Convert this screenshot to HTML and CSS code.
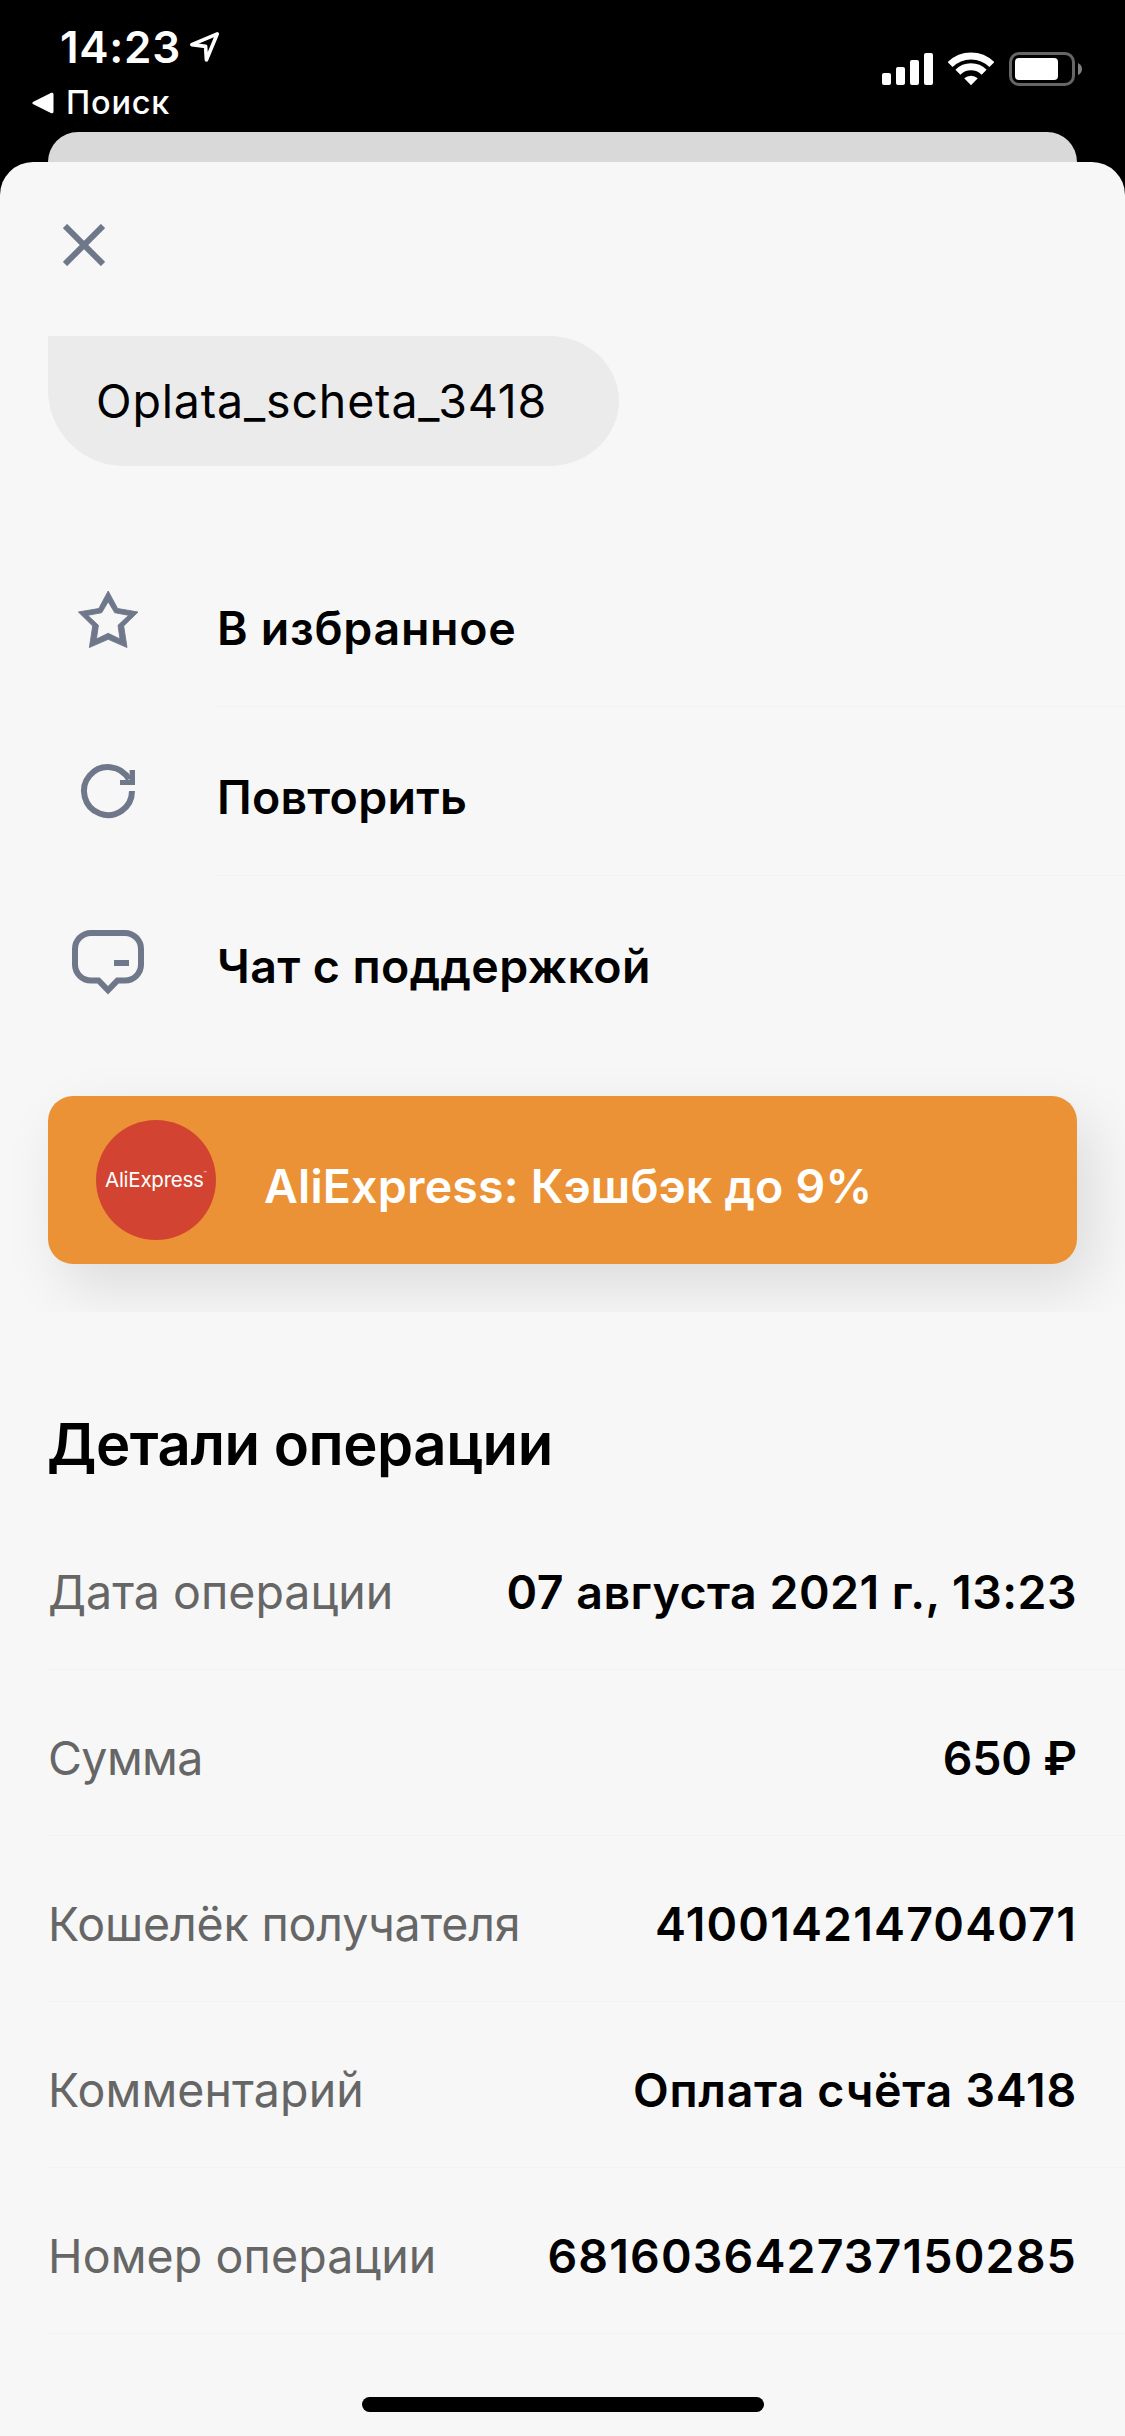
FILE: index.html
```
<!DOCTYPE html>
<html lang="ru">
<head>
<meta charset="utf-8">
<title>Детали операции</title>
<link rel="stylesheet" href="styles.css">
</head>
<body>
<div class="screen">
  <header class="status">
    <div class="status-left">
      <div class="clock-row">
        <span class="clock">14:23</span>
        <svg class="location" width="32" height="32" viewBox="0 0 32 32"><path d="M28.3 3.8 2.8 14.6 16.6 16.4 17.4 30Z"/></svg>
      </div>
      <div class="back-row">
        <svg class="back-arrow" width="22" height="22" viewBox="0 0 22 22"><path d="M2 11 20 2.200V19.800Z"/></svg>
        <span class="back-label">Поиск</span>
      </div>
    </div>
    <div class="status-icons">
      <svg width="51" height="34" viewBox="0 0 51 34" fill="#fff">
        <rect x="0" y="21" width="9" height="12" rx="2"/>
        <rect x="14" y="15" width="9" height="18" rx="2"/>
        <rect x="28" y="8" width="9" height="25" rx="2"/>
        <rect x="42" y="1" width="9" height="32" rx="2"/>
      </svg>
      <svg width="46" height="34" viewBox="0 0 46 34" fill="none" stroke="#fff" stroke-width="7">
        <path d="M2.100 12.600a29.500 29.500 0 0 1 41.800 0"/>
        <path d="M9.900 20.200a18.500 18.500 0 0 1 26.200 0"/>
        <path d="M23 33.200 16.200 26.200a10.500 10.500 0 0 1 13.600 0Z" fill="#fff" stroke="none"/>
      </svg>
      <svg width="73" height="34" viewBox="0 0 73 34">
        <rect x="1.500" y="1.500" width="63" height="31" rx="8.500" fill="none" stroke="#666" stroke-width="3"/>
        <rect x="6" y="6" width="43" height="22" rx="4" fill="#fff"/>
        <path d="M69 11q4 2 4 6t-4 6Z" fill="#808080"/>
      </svg>
    </div>
  </header>
  <div class="card-behind"></div>
  <main class="sheet">
    <div class="sheet-top">
      <svg class="close" width="42" height="42" viewBox="0 0 42 42"><path d="M2 2 40 40M40 2 2 40"/></svg>
    </div>
    <div class="bubble">Oplata_scheta_3418</div>

    <ul class="actions">
      <li class="action">
        <svg class="action-icon star" viewBox="0 0 72 72"><path fill-rule="evenodd" d="M36.200 7 45.600 24.500 66 28 51.700 42 55 63.500 36.200 55.300 17.400 63.500 20.700 42 6.400 28 26.800 24.500ZM36.200 17.700 29.700 28.700 15.800 31.300 26.400 41.300 24.400 55 36.200 49.300 48 55 46 41.300 56.600 31.300 42.700 28.700Z"/></svg>
        <span class="action-label favorite">В избранное</span>
      </li>
      <li class="action">
        <svg class="action-icon" viewBox="0 0 72 72"><path d="M60 38A24 24 0 1 1 57 26.400" fill="none" stroke="#6f778b" stroke-width="6"/><path d="M57.600 17H63V32H48V27H57.600Z"/></svg>
        <span class="action-label repeat">Повторить</span>
      </li>
      <li class="action">
        <svg class="action-icon" viewBox="0 0 72 72"><path d="M26.500 58.500H19A16 16 0 0 1 3 42.500V27A16 16 0 0 1 19 11H53A16 16 0 0 1 69 27V42.500A16 16 0 0 1 53 58.500H45.500L36 68.300 26.500 58.500Z" fill="none" stroke="#6f778b" stroke-width="6"/><path d="M42 38H57V44H42Z"/></svg>
        <span class="action-label chat">Чат с поддержкой</span>
      </li>
    </ul>

    <section class="promo">
      <div class="banner">
        <div class="logo"><span class="logo-text">AliExpress</span><span class="logo-tm">™</span></div>
        <span class="banner-text">AliExpress: Кэшбэк до 9%</span>
      </div>
    </section>

    <section class="details">
      <h1 class="title">Детали операции</h1>
      <dl class="rows">
        <div class="row"><dt class="key date-key">Дата операции</dt><dd class="value date">07 августа 2021 г., 13:23</dd></div>
        <div class="row"><dt class="key sum-key">Сумма</dt><dd class="value sum">650 ₽</dd></div>
        <div class="row"><dt class="key wallet-key">Кошелёк получателя</dt><dd class="value digits">410014214704071</dd></div>
        <div class="row"><dt class="key">Комментарий</dt><dd class="value comment">Оплата счёта 3418</dd></div>
        <div class="row"><dt class="key">Номер операции</dt><dd class="value digits">681603642737150285</dd></div>
      </dl>
    </section>
    <div class="home-indicator"></div>
  </main>
</div>
</body>
</html>
```
FILE: styles.css
```
* { box-sizing: border-box; }

body {
  margin: 0;
  background: #000;
  font-family: Inter, "Liberation Sans", sans-serif;
  color: #000;
}

svg { display: block; flex: none; }

.screen {
  width: 1125px;
  height: 2436px;
  overflow: hidden;
  background: #000;
  display: flex;
  flex-direction: column;
  font-size: 46.5px;
  line-height: 60px;
  white-space: nowrap;
}

/* Status bar */
.status {
  height: 132px;
  flex: none;
  display: flex;
  justify-content: space-between;
  padding: 21px 43px 0 32px;
  color: #fff;
}

.status-left { display: flex; flex-direction: column; gap: 9px; }
.clock-row { display: flex; padding-left: 28px; gap: 8px; }
.clock { font-size: 44px; line-height: 52px; font-weight: 600; letter-spacing: 0.7px; }
.location { margin-top: 9px; fill: none; stroke: #fff; stroke-width: 3.6; stroke-linejoin: round; }
.back-row { display: flex; gap: 12px; }
.back-arrow { margin-top: 10px; fill: #fff; stroke: #fff; stroke-width: 3; stroke-linejoin: round; }
.back-label { padding-top: 1px; font-size: 32.5px; line-height: 40px; font-weight: 500; letter-spacing: 0.8px; }
.status-icons { display: flex; gap: 15px; padding-top: 31px; }

/* Sheet stack */
.card-behind {
  height: 30px;
  flex: none;
  margin: 0 48px;
  background: #d9d9d9;
  border-radius: 30px 30px 0 0;
}

.sheet {
  flex: 1;
  background: #f7f7f7;
  border-radius: 33px 33px 0 0;
}

.sheet-top { height: 174px; padding: 62px 0 0 63px; }
.close { fill: none; stroke: #6f778b; stroke-width: 6; }

.bubble {
  width: 571px;
  height: 130px;
  margin-left: 48px;
  padding: 35px 0 0 48px;
  background: #ebebeb;
  border-radius: 0 70px 70px 76px / 0 65px 65px 76px;
  letter-spacing: 0.84px;
}

/* Actions */
.actions { list-style: none; margin: 72px 0 0; padding: 0; }

.action {
  height: 169px;
  display: flex;
  gap: 72px;
  padding-left: 72px;
}

.action-icon { width: 72px; height: 72px; margin-top: 46px; fill: #6f778b; overflow: visible; }
.star { stroke: #6f778b; stroke-width: 0.9; }
.action-label { flex: 1; padding: 60px 0 0 1px; font-weight: 600; border-bottom: 1px solid #f2f2f2; }
.favorite { letter-spacing: 0.72px; }
.repeat { letter-spacing: 0.25px; }
.chat { letter-spacing: 0.4px; border-bottom: 0; }

/* Promo: the banner shadow is cut at the section edge */
.promo { height: 267px; padding: 51px 48px 0; overflow: hidden; }

.banner {
  height: 168px;
  display: flex;
  gap: 48px;
  padding: 24px 48px;
  border-radius: 25px;
  background: #ec9236;
  box-shadow: 15px 23px 60px rgba(0, 0, 0, 0.115);
}

.logo {
  width: 120px;
  height: 120px;
  border-radius: 50%;
  background: #d24431;
  color: #fff;
  display: flex;
  padding: 45px 0 0 9px;
  line-height: 30px;
}

.logo-text { font-size: 20.5px; letter-spacing: -0.25px; }
.logo-tm { font-size: 5px; line-height: 16px; }
.banner-text { padding-top: 36px; color: #fff; font-weight: 600; letter-spacing: 0.2px; }

/* Details */
.details { padding: 96px 0 0 48px; }
.title { margin: 0 0 24px -1px; font-size: 58px; line-height: 72px; font-weight: 600; letter-spacing: -0.45px; }
.rows { margin: 0; }

.row {
  height: 166px;
  display: flex;
  justify-content: space-between;
  padding: 58px 48px 0 0;
  border-bottom: 1px solid #f2f2f2;
}

.key { color: #666; letter-spacing: 0.1px; }
.date-key { letter-spacing: 0; }
.sum-key { letter-spacing: -0.6px; }
.wallet-key { letter-spacing: -0.17px; }
.value { margin: 0; font-weight: 600; }
.date { letter-spacing: 0.47px; }
.sum { letter-spacing: -0.2px; }
.digits { letter-spacing: 1.15px; }
.comment { letter-spacing: 0.75px; }

.home-indicator {
  width: 402px;
  height: 15px;
  margin: 63px auto 0;
  border-radius: 8px;
  background: #000;
}
```
